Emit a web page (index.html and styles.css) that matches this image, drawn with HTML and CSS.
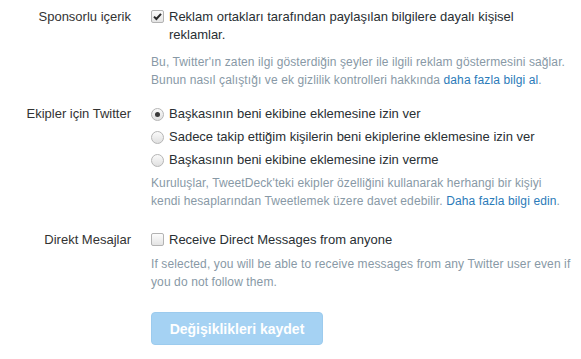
FILE: index.html
```html
<!DOCTYPE html>
<html lang="tr">
<head>
<meta charset="utf-8">
<link rel="stylesheet" href="styles.css">
</head>
<body>
<div class="settings">
  <div class="row row-ads">
    <div class="label">Sponsorlu içerik</div>
    <div class="controls">
      <label class="choice">
        <span class="checkbox checked"><svg viewBox="0 0 13 13" width="13" height="13"><path d="M3 6.6 L5.4 9 L10 3.8" fill="none" stroke="#2a2a2a" stroke-width="2"/></svg></span>
        <span class="choice-text">Reklam ortakları tarafından paylaşılan bilgilere dayalı kişisel reklamlar.</span>
      </label>
      <p class="help help-ads">Bu, Twitter'ın zaten ilgi gösterdiğin şeyler ile ilgili reklam göstermesini sağlar. Bunun nasıl çalıştığı ve ek gizlilik kontrolleri hakkında <a href="#">daha fazla bilgi al</a>.</p>
    </div>
  </div>

  <div class="row row-teams">
    <div class="label">Ekipler için Twitter</div>
    <div class="controls">
      <label class="choice radio-choice">
        <span class="radio checked"></span>
        <span class="choice-text">Başkasının beni ekibine eklemesine izin ver</span>
      </label>
      <label class="choice radio-choice">
        <span class="radio"></span>
        <span class="choice-text">Sadece takip ettiğim kişilerin beni ekiplerine eklemesine izin ver</span>
      </label>
      <label class="choice radio-choice">
        <span class="radio"></span>
        <span class="choice-text">Başkasının beni ekibine eklemesine izin verme</span>
      </label>
      <p class="help help-teams">Kuruluşlar, TweetDeck'teki ekipler özelliğini kullanarak herhangi bir kişiyi kendi hesaplarından Tweetlemek üzere davet edebilir. <a href="#">Daha fazla bilgi edin</a>.</p>
    </div>
  </div>

  <div class="row row-dm">
    <div class="label">Direkt Mesajlar</div>
    <div class="controls">
      <label class="choice">
        <span class="checkbox"></span>
        <span class="choice-text">Receive Direct Messages from anyone</span>
      </label>
      <p class="help help-dm">If selected, you will be able to receive messages from any Twitter user even if you do not follow them.</p>
    </div>
  </div>

  <div class="row row-actions">
    <div class="label"></div>
    <div class="controls">
      <button class="save-btn" type="button" disabled>Değişiklikleri kaydet</button>
    </div>
  </div>
</div>
</body>
</html>
```

FILE: styles.css
```css
html, body {
  margin: 0;
  padding: 0;
  background: #ffffff;
}

body {
  font-family: "Liberation Sans", Arial, sans-serif;
  font-size: 13px;
  line-height: 18px;
  color: #292f33;
}

.settings {
  padding-top: 8px;
  display: flex;
  flex-direction: column;
}

.row {
  display: grid;
  grid-template-columns: 131px 420px;
  column-gap: 20px;
}

.row-teams { margin-top: 16px; }
.row-dm { margin-top: 21px; }
.row-actions { margin-top: 21px; }

.label {
  text-align: right;
  color: #333333;
}

.controls {
  display: flex;
  flex-direction: column;
  align-items: flex-start;
}

.choice {
  display: flex;
  align-items: flex-start;
  gap: 5px;
  align-self: stretch;
}

.radio-choice + .radio-choice { margin-top: 5px; }

.choice-text {
  flex: 1;
  color: #292f33;
}

.checkbox {
  flex: none;
  width: 11px;
  height: 11px;
  margin-top: 2px;
  border: 1px solid #b3b3b3;
  border-radius: 2px;
  background: linear-gradient(#fcfcfc, #e4e4e4);
  position: relative;
}

.checkbox svg {
  position: absolute;
  left: -1px;
  top: -1px;
}

.radio {
  flex: none;
  width: 11px;
  height: 11px;
  margin-top: 3px;
  border: 1px solid #b5b5b5;
  border-radius: 50%;
  background: linear-gradient(#fafafa, #e0e0e0);
  position: relative;
}

.radio.checked::after {
  content: "";
  position: absolute;
  left: 3px;
  top: 3px;
  width: 5px;
  height: 5px;
  border-radius: 50%;
  background: #3a3a3a;
}

.help {
  margin: 0;
  font-size: 12px;
  line-height: 18px;
  letter-spacing: 0.11px;
  color: #8899a6;
}

.help a {
  color: #2b7bb9;
  text-decoration: none;
}

.help-ads { margin-top: 9px; }
.help-teams { margin-top: 5px; }
.help-dm { margin-top: 6px; }

.save-btn {
  width: 172px;
  height: 33px;
  padding: 0;
  border: 1px solid #9ccbee;
  border-radius: 4px;
  background: #a5d2f3;
  color: #ffffff;
  font-family: "Liberation Sans", Arial, sans-serif;
  font-size: 14px;
  font-weight: bold;
  cursor: default;
  opacity: 1;
}
```
